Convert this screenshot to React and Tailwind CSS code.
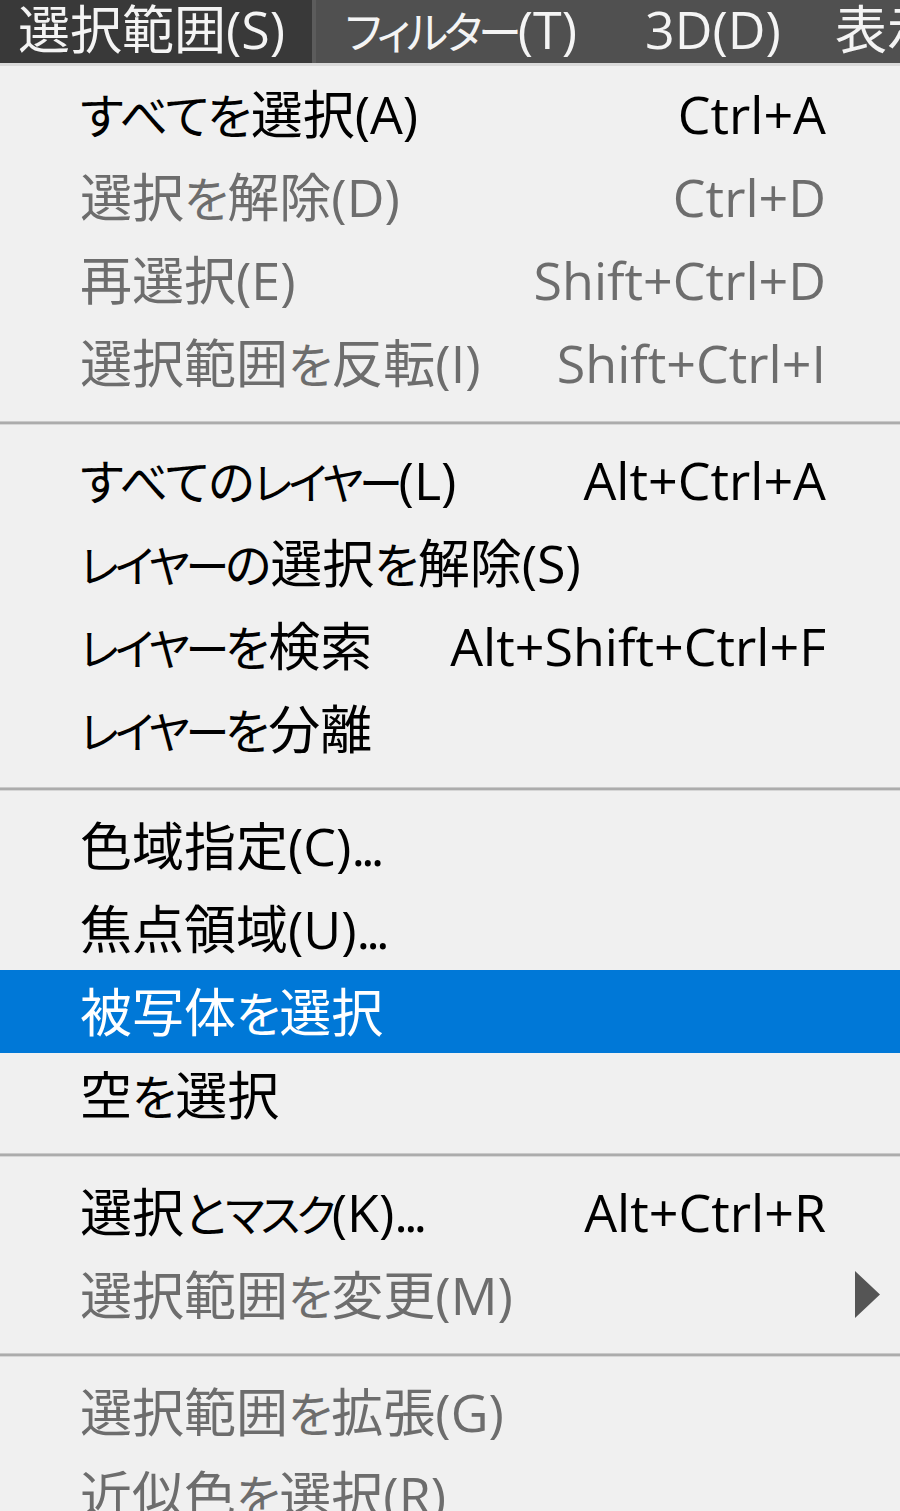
import React from "react";

const groups = [
  [
    { label: "すべてを選択(A)", sc: "Ctrl+A" },
    { label: "選択を解除(D)", sc: "Ctrl+D", dis: true },
    { label: "再選択(E)", sc: "Shift+Ctrl+D", dis: true },
    { label: "選択範囲を反転(I)", sc: "Shift+Ctrl+I", dis: true },
  ],
  [
    { label: "すべてのレイヤー(L)", sc: "Alt+Ctrl+A" },
    { label: "レイヤーの選択を解除(S)" },
    { label: "レイヤーを検索", sc: "Alt+Shift+Ctrl+F" },
    { label: "レイヤーを分離" },
  ],
  [
    { label: "色域指定(C)..." },
    { label: "焦点領域(U)..." },
    { label: "被写体を選択", hl: true },
    { label: "空を選択" },
  ],
  [
    { label: "選択とマスク(K)...", sc: "Alt+Ctrl+R" },
    { label: "選択範囲を変更(M)", dis: true, sub: true },
  ],
  [
    { label: "選択範囲を拡張(G)", dis: true },
    { label: "近似色を選択(R)", dis: true },
  ],
];

function T({ text }) {
  const parts =
    text.match(/[\u30A0-\u30FF]+|[\u3040-\u309F]+|\.+|[^\u3040-\u30FF.]+/g) || [];
  return parts.map((p, i) => {
    let cls = "";
    if (/[\u30A0-\u30FF]/.test(p)) cls = "text-[44px] tracking-[-4px]";
    else if (/[\u3040-\u309F]/.test(p)) cls = "text-[48px] tracking-[-1px]";
    else if (p[0] === ".") cls = "tracking-[-4px]";
    return (
      <span key={i} className={cls}>
        {p}
      </span>
    );
  });
}

function Row({ item }) {
  const color = item.hl
    ? "text-white bg-[#0078d7]"
    : item.dis
    ? "text-[#6d6d6d]"
    : "text-black";
  return (
    <div
      className={`grid grid-cols-[1fr_auto_74px] items-center h-[83px] pl-[80px] ${color}`}
    >
      <span className="whitespace-nowrap">
        <T text={item.label} />
      </span>
      <span className="whitespace-nowrap">{item.sc || ""}</span>
      <span className="flex items-center pl-[29px]">
        {item.sub && (
          <svg width="25" height="47" viewBox="0 0 25 47">
            <polygon points="0,0 25,23.5 0,47" fill="#555555" />
          </svg>
        )}
      </span>
    </div>
  );
}

function Separator() {
  return (
    <div className="h-[34px] flex flex-col pt-[17px]">
      <div className="h-[1px] bg-[#c9c9c9]" />
      <div className="h-[2px] bg-[#acacac]" />
      <div className="h-[1px] bg-[#d6d6d6]" />
    </div>
  );
}

export default function App() {
  return (
    <div className="w-[900px] h-[1511px] overflow-hidden bg-[#f0f0f0] font-['Open_Sans','Noto_Sans_CJK_JP',sans-serif] [font-feature-settings:'palt'] text-[52px] leading-none">
      <div className="flex h-[63px] bg-[#505050] text-[#f4f4f4] overflow-hidden">
        <div className="w-[312px] shrink-0 h-full bg-[#393939] flex items-center pl-[18px] pb-[6px] whitespace-nowrap">
          <T text="選択範囲(S)" />
        </div>
        <div className="w-[4px] shrink-0 h-full bg-[#5c5c5c]" />
        <div className="flex items-center pl-[29px] pb-[6px] whitespace-nowrap">
          <span className="w-[300px] shrink-0">
            <T text="フィルター(T)" />
          </span>
          <span className="w-[190px] shrink-0">3D(D)</span>
          <span className="shrink-0">
            <T text="表示(V)" />
          </span>
        </div>
      </div>
      <div className="h-[3px] bg-[#dadada]" />
      <div className="pt-[6px]">
        {groups.map((g, gi) => (
          <div key={gi}>
            {gi > 0 && <Separator />}
            {g.map((item, ii) => (
              <Row key={ii} item={item} />
            ))}
          </div>
        ))}
      </div>
    </div>
  );
}
